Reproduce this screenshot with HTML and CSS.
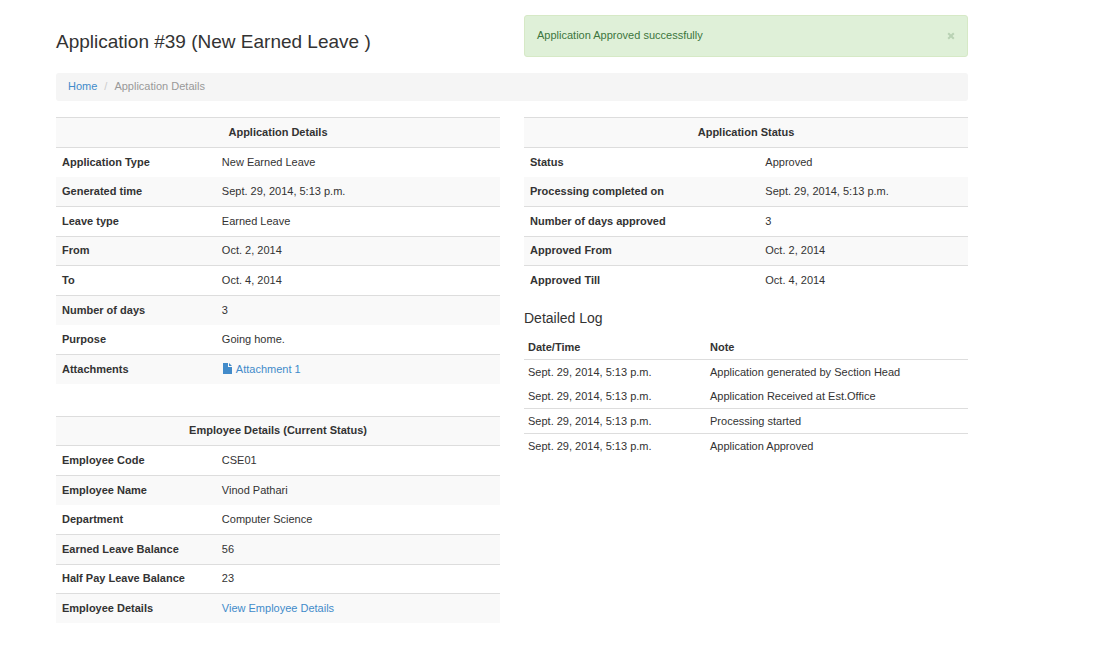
FILE: index.html
```html
<!DOCTYPE html>
<html lang="en">
<head>
<meta charset="utf-8">
<meta name="viewport" content="width=device-width, initial-scale=1">
<title>Application #39</title>
<link rel="stylesheet" href="styles.css">
</head>
<body>
<main class="page">
  <header class="columns page-header">
    <h1 class="page-title">Application #39 (New Earned Leave )</h1>
    <div class="alert" role="status">
      <span>Application Approved successfully</span>
      <button class="alert-close" type="button" aria-label="Close">
        <svg class="close-icon" viewBox="0 0 8 8" aria-hidden="true"><path d="M1.2 1.2L6.8 6.8M6.8 1.2L1.2 6.8"/></svg>
      </button>
    </div>
  </header>

  <nav aria-label="Breadcrumb">
    <ol class="breadcrumb">
      <li><a href="#">Home</a></li>
      <li class="current" aria-current="page">Application Details</li>
    </ol>
  </nav>

  <div class="columns">
    <div class="column">
      <table class="table striped details">
        <colgroup><col class="col-label"><col></colgroup>
        <tbody>
          <tr><th class="caption" colspan="2">Application Details</th></tr>
          <tr><th scope="row">Application Type</th><td>New Earned Leave</td></tr>
          <tr class="no-line"><th scope="row">Generated time</th><td>Sept. 29, 2014, 5:13 p.m.</td></tr>
          <tr><th scope="row">Leave type</th><td>Earned Leave</td></tr>
          <tr><th scope="row">From</th><td>Oct. 2, 2014</td></tr>
          <tr><th scope="row">To</th><td>Oct. 4, 2014</td></tr>
          <tr><th scope="row">Number of days</th><td>3</td></tr>
          <tr class="no-line"><th scope="row">Purpose</th><td>Going home.</td></tr>
          <tr><th scope="row">Attachments</th><td><a class="file-link" href="#"><svg class="file-icon" viewBox="0 0 10 11" aria-hidden="true"><path d="M1 0H6V4H10V11H1Z"/><path d="M7 0L10 3H7Z"/></svg>Attachment 1</a></td></tr>
        </tbody>
      </table>

      <table class="table striped employee">
        <colgroup><col class="col-label"><col></colgroup>
        <tbody>
          <tr><th class="caption" colspan="2">Employee Details (Current Status)</th></tr>
          <tr><th scope="row">Employee Code</th><td>CSE01</td></tr>
          <tr><th scope="row">Employee Name</th><td>Vinod Pathari</td></tr>
          <tr class="no-line"><th scope="row">Department</th><td>Computer Science</td></tr>
          <tr><th scope="row">Earned Leave Balance</th><td>56</td></tr>
          <tr><th scope="row">Half Pay Leave Balance</th><td>23</td></tr>
          <tr><th scope="row">Employee Details</th><td><a href="#">View Employee Details</a></td></tr>
        </tbody>
      </table>
    </div>

    <div>
      <table class="table striped details">
        <colgroup><col class="col-status"><col></colgroup>
        <tbody>
          <tr><th class="caption" colspan="2">Application Status</th></tr>
          <tr><th scope="row">Status</th><td>Approved</td></tr>
          <tr class="no-line"><th scope="row">Processing completed on</th><td>Sept. 29, 2014, 5:13 p.m.</td></tr>
          <tr><th scope="row">Number of days approved</th><td>3</td></tr>
          <tr><th scope="row">Approved From</th><td>Oct. 2, 2014</td></tr>
          <tr><th scope="row">Approved Till</th><td>Oct. 4, 2014</td></tr>
        </tbody>
      </table>

      <h2 class="log-title">Detailed Log</h2>
      <table class="table log">
        <colgroup><col class="col-date"><col></colgroup>
        <thead>
          <tr class="no-line"><th scope="col">Date/Time</th><th scope="col">Note</th></tr>
        </thead>
        <tbody>
          <tr><td>Sept. 29, 2014, 5:13 p.m.</td><td>Application generated by Section Head</td></tr>
          <tr class="no-line"><td>Sept. 29, 2014, 5:13 p.m.</td><td>Application Received at Est.Office</td></tr>
          <tr><td>Sept. 29, 2014, 5:13 p.m.</td><td>Processing started</td></tr>
          <tr><td>Sept. 29, 2014, 5:13 p.m.</td><td>Application Approved</td></tr>
        </tbody>
      </table>
    </div>
  </div>
</main>
</body>
</html>
```

FILE: styles.css
```css
* {
  box-sizing: border-box;
}

body {
  margin: 0;
  background: #fff;
  color: #333;
  font-family: "Liberation Sans", Arial, Helvetica, sans-serif;
  font-size: 11px;
  line-height: 16px;
}

a {
  color: #428bca;
  text-decoration: none;
}

.page {
  display: flex;
  flex-direction: column;
  gap: 16px;
  padding: 15px 130px 24px 56px;
}

.columns {
  display: grid;
  grid-template-columns: repeat(2, minmax(0, 1fr));
  column-gap: 24px;
  align-items: start;
}

.page-header {
  align-items: end;
}

.page-title {
  margin: 0;
  padding-bottom: 4px;
  font-size: 19px;
  font-weight: 400;
  line-height: 22px;
}

.alert {
  display: flex;
  align-items: center;
  justify-content: space-between;
  padding: 11px 12px 13px;
  border: 1px solid #d6e9c6;
  border-radius: 3px;
  background: #dff0d8;
  color: #3c763d;
}

.alert-close {
  display: flex;
  padding: 1px 0 0;
  border: 0;
  background: none;
  cursor: pointer;
}

.close-icon {
  width: 8px;
  height: 8px;
  fill: none;
  stroke: #b9d2b4;
  stroke-width: 2;
}

.breadcrumb {
  display: flex;
  margin: 0;
  padding: 5px 12px 7px;
  border-radius: 3px;
  background: #f5f5f5;
  list-style: none;
}

.breadcrumb .current {
  color: #999;
}

.breadcrumb .current::before {
  content: "/";
  padding: 0 7px;
  color: #ccc;
}

.column {
  display: flex;
  flex-direction: column;
  gap: 32px;
}

.table {
  width: 100%;
  border-collapse: separate;
  border-spacing: 0;
  table-layout: fixed;
}

.table th,
.table td {
  height: 30px;
  padding: 0 6px 2px;
  border-top: 1px solid #ddd;
  text-align: left;
  vertical-align: middle;
}

.table .caption {
  text-align: center;
}

.table .no-line > * {
  border-top-color: transparent;
}

.striped tr:nth-child(odd) > * {
  background: #f9f9f9;
}

.details tr:nth-child(3) > *,
.details tr:nth-child(5) > *,
.details tr:nth-child(8) > *,
.employee tr:nth-child(1) > *,
.employee tr:nth-child(4) > *,
.employee tr:nth-child(6) > * {
  height: 29px;
}

.col-label {
  width: 36%;
}

.col-status {
  width: 53%;
}

.col-date {
  width: 41%;
}

.log-title {
  margin: 0;
  padding: 15px 0 7px;
  font-size: 14px;
  font-weight: 400;
  line-height: 16px;
}

.table.log th,
.table.log td {
  height: 25px;
  padding: 0 4px;
}

.table.log th {
  height: 26px;
}

.table.log tbody tr:first-child td {
  height: 24px;
}

.file-link {
  display: flex;
  align-items: center;
  gap: 4px;
}

.file-icon {
  width: 10px;
  height: 11px;
  fill: currentColor;
}
```
